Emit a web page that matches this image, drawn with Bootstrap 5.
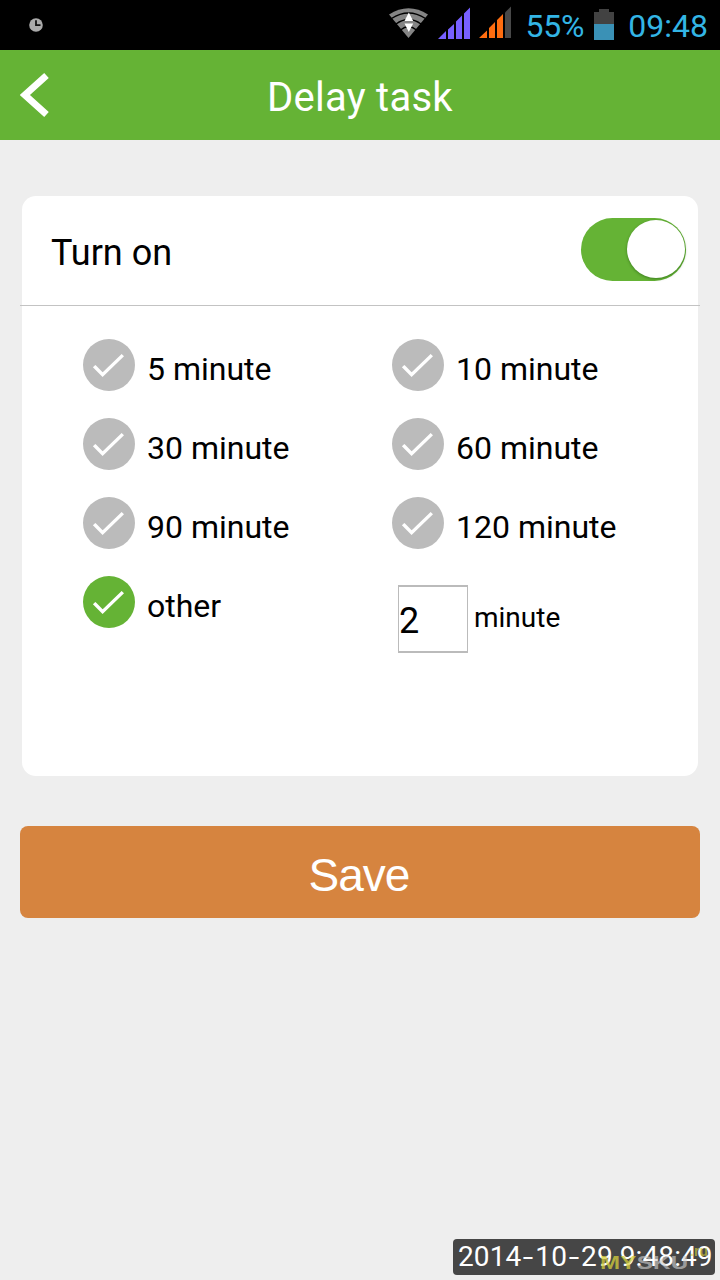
<!DOCTYPE html>
<html lang="en">
<head>
<meta charset="utf-8">
<meta name="viewport" content="width=device-width, initial-scale=1">
<title>Delay task</title>
<link href="https://cdn.jsdelivr.net/npm/bootstrap@5.3.0/dist/css/bootstrap.min.css" rel="stylesheet">
<style>
  body { background: #eee; color: #000; font-family: Roboto, "Liberation Sans", sans-serif; width: 720px; height: 1280px; overflow: hidden; }
  svg { display: block; flex: none; }
  .statusbar { height: 50px; background: #000; color: #33b5e5; font-size: 32px; line-height: 50px; padding: 2px 12px 0 28px; }
  .clock { margin-top: -2px; }
  .signals { margin-top: -4px; }
  .percent { margin-left: 10px; letter-spacing: -.2px; }
  .battery { margin: -3px 14px 0 10px; }
  .titlebar { height: 90px; background: #65b335; color: #fff; padding-left: 20px; }
  .titlebar h1 { font-size: 40px; font-weight: 400; line-height: 86px; letter-spacing: .25px; padding: 6px 49px 0 0; }
  .panel { margin: 56px 22px 0; height: 580px; background: #fff; border-radius: 14px; }
  .panel-top { height: 110px; margin: 0 -2px; padding: 0 14px 0 31px; border-bottom: 1px solid #c3c3c3; font-size: 36px; }
  .panel-top > span { padding-top: 4px; }
  .switch-track { width: 105px; height: 63px; border-radius: 32px; background: #65b335; padding: 2px 1px 0 0; margin-top: -2px; }
  .switch-knob { width: 58px; height: 58px; border-radius: 50%; background: #fff; box-shadow: 0 1px 3px rgba(0,50,0,.4); }
  .choices { grid-template-columns: 309px 1fr; grid-auto-rows: 79px; padding: 33px 0 0 61px; }
  .choice { font-size: 32px; line-height: 52px; gap: 12px; }
  .choice span { padding-top: 4px; }
  .tick { width: 52px; height: 52px; color: #bbb; }
  .tick.on { color: #65b335; }
  .amount { width: 70px; height: 68px; border: 1px solid #bbb; border-top-width: 2px; border-bottom-width: 2px; border-radius: 0; font-size: 36px; padding: 3px 0 0; color: #000; background: #fff; }
  .custom { padding: 7px 0 0 6px; gap: 6px; font-size: 28px; }
  .custom span { margin-top: -2px; }
  .save { margin: 50px 20px 0; height: 92px; width: 680px; border-radius: 8px; background: #d6843f; color: #fff; border: 0; font: 46px "Liberation Sans", sans-serif; letter-spacing: -1px; padding: 5px 2px 0 0; }
  .stamp { right: 5px; bottom: 5px; width: 262px; height: 36px; background: #464646; border-radius: 4px; color: #fff; font-size: 28px; line-height: 36px; padding-left: 5px; white-space: nowrap; letter-spacing: .1px; }
  .dash { display: inline-block; width: 14px; text-align: center; transform: scaleX(1.35); }
  .site { left: 147px; top: 14px; font: bold 18px/20px "Liberation Sans", sans-serif; color: rgba(205,205,205,.65); transform: scaleX(1.34); transform-origin: 0 0; letter-spacing: .2px; }
  .site b { color: rgba(214,207,60,.75); }
  .site-tld { left: 237px; top: 2px; font: bold 14px/20px "Liberation Sans", sans-serif; color: rgba(214,207,60,.65); }
</style>
</head>
<body class="position-relative">
<svg width="0" height="0" class="position-absolute"><defs>
  <symbol id="check" viewBox="0 0 52 52"><circle cx="26" cy="26" r="26" fill="currentColor"/><path d="M12.300 28.300 19.600 35.600 38.600 17.300" fill="none" stroke="#fff" stroke-width="3.400" stroke-linecap="square"/></symbol>
</defs></svg>

<header class="statusbar d-flex align-items-center">
  <svg class="clock me-auto" width="16" height="16" viewBox="0 0 16 16"><circle cx="8" cy="8" r="6.800" fill="#aaa"/><path d="M8 3.200V8.200H12.500" fill="none" stroke="#111" stroke-width="1.800"/></svg>
  <svg class="signals" width="132" height="48" viewBox="384 0 132 48">
    <path d="M389 14.500Q408.500 2 428 14.500L408.500 38Z" fill="#858585"/>
    <path d="M391.500 18.500Q408.500 7.500 425.500 18.500M396 24Q408.500 15 421 24M400.500 30Q408.500 23.500 416.500 30" fill="none" stroke="#000" stroke-width="1.400"/>
    <path d="M404.500 21 408.800 12.500 413.200 21ZM404.500 23.500H413.200L408.800 32Z" fill="#fff"/>
    <path d="M438 39 446 31V39ZM448 39V29.500L454 24V39ZM456 39V21.500L462 15.500V39ZM464 39V13.500L470 7.500V39Z" fill="#7760ff"/>
    <path d="M479 38 487 30.500V38ZM489 38V28L495 22V38ZM497 38V20L503 14V38Z" fill="#ff6d10"/>
    <path d="M505 38V12.500L511 6.500V38Z" fill="#484848"/>
  </svg>
  <span class="percent">55%</span>
  <svg class="battery" width="20" height="31" viewBox="0 0 20 31"><path d="M0 3H5V0H15V3H20V15H0Z" fill="#424242"/><path d="M0 15H20V31H0Z" fill="#3a91b6"/></svg>
  <span>09:48</span>
</header>

<nav class="titlebar d-flex align-items-center">
  <svg width="29" height="46" viewBox="20 71 29 46"><path d="M46.500 74.500 24.900 94 46.500 113.500" fill="none" stroke="#fff" stroke-width="6.800"/></svg>
  <h1 class="flex-grow-1 text-center m-0">Delay task</h1>
</nav>

<main>
  <section class="panel">
    <div class="panel-top d-flex align-items-center justify-content-between">
      <span>Turn on</span>
      <div class="switch-track d-flex justify-content-end"><div class="switch-knob"></div></div>
    </div>
    <div class="choices d-grid">
      <div class="choice d-flex"><svg class="tick"><use href="#check"/></svg><span>5 minute</span></div>
      <div class="choice d-flex"><svg class="tick"><use href="#check"/></svg><span>10 minute</span></div>
      <div class="choice d-flex"><svg class="tick"><use href="#check"/></svg><span>30 minute</span></div>
      <div class="choice d-flex"><svg class="tick"><use href="#check"/></svg><span>60 minute</span></div>
      <div class="choice d-flex"><svg class="tick"><use href="#check"/></svg><span>90 minute</span></div>
      <div class="choice d-flex"><svg class="tick"><use href="#check"/></svg><span>120 minute</span></div>
      <div class="choice d-flex"><svg class="tick on"><use href="#check"/></svg><span>other</span></div>
      <div class="custom d-flex align-items-center"><input class="amount" type="text" value="2" aria-label="Minutes"><span>minute</span></div>
    </div>
  </section>
  <button class="save btn d-block text-center" type="button">Save</button>
</main>

<div class="stamp position-absolute">2014<span class="dash">-</span>10<span class="dash">-</span>29 9:48:49
  <div class="site position-absolute"><b>MY</b>SKU</div>
  <div class="site-tld position-absolute">.ru</div>
</div>
<script src="https://cdn.jsdelivr.net/npm/bootstrap@5.3.0/dist/js/bootstrap.bundle.min.js"></script>
</body>
</html>
